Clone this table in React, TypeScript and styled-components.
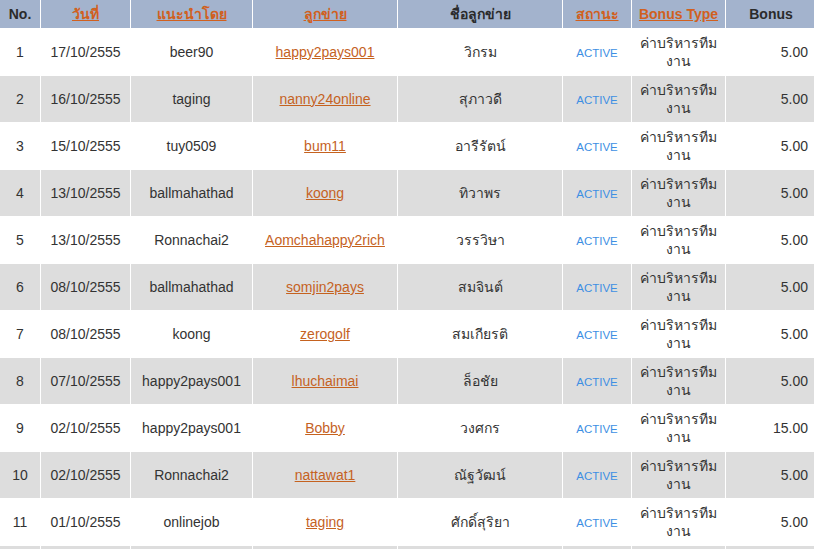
import React from "react";
import styled, { createGlobalStyle } from "styled-components";

const Global = createGlobalStyle`
  html, body { margin: 0; padding: 0; background: #ffffff; }
  body { font-family: "Liberation Sans", Arial, "Noto Sans", sans-serif; overflow: hidden; }
`;

const Table = styled.table`
  border-collapse: separate;
  border-spacing: 1px;
  margin: -1px 0 0 -1px;
  table-layout: fixed;
  width: 817px;
  font-size: 14px;
  color: #333333;
`;

const Th = styled.th<{ $w: number }>`
  width: ${(p) => p.$w}px;
  height: 28px;
  padding: 0 4px;
  background: #a3b3cd;
  color: #2b2b2b;
  font-weight: bold;
  font-size: 14px;
  text-align: center;
  box-sizing: border-box;
`;

const HeadLink = styled.a`
  color: #d1601e;
  text-decoration: underline;
`;

const Row = styled.tr<{ $alt: boolean }>`
  background: ${(p) => (p.$alt ? "#dddddd" : "#ffffff")};
`;

const Td = styled.td<{ $align?: string }>`
  height: 46px;
  padding: 0 ${(p) => (p.$align === "right" ? "8px" : "5px")} 0 5px;
  text-align: ${(p) => p.$align || "center"};
  vertical-align: middle;
  box-sizing: border-box;
  line-height: 18px;
`;

const Link = styled.a`
  color: #c5621f;
  text-decoration: underline;
`;

const Status = styled.span`
  color: #3d8fe3;
  font-size: 11.5px;
`;

const rows = [
  ["17/10/2555", "beer90", "happy2pays001", "วิกรม", "5.00"],
  ["16/10/2555", "taging", "nanny24online", "สุภาวดี", "5.00"],
  ["15/10/2555", "tuy0509", "bum11", "อารีรัตน์", "5.00"],
  ["13/10/2555", "ballmahathad", "koong", "ทิวาพร", "5.00"],
  ["13/10/2555", "Ronnachai2", "Aomchahappy2rich", "วรรวิษา", "5.00"],
  ["08/10/2555", "ballmahathad", "somjin2pays", "สมจินต์", "5.00"],
  ["08/10/2555", "koong", "zerogolf", "สมเกียรติ", "5.00"],
  ["07/10/2555", "happy2pays001", "lhuchaimai", "ล็อชัย", "5.00"],
  ["02/10/2555", "happy2pays001", "Bobby", "วงศกร", "15.00"],
  ["02/10/2555", "Ronnachai2", "nattawat1", "ณัฐวัฒน์", "5.00"],
  ["01/10/2555", "onlinejob", "taging", "ศักดิ์สุริยา", "5.00"],
];

export default function App() {
  return (
    <>
      <Global />
      <Table>
        <thead>
          <tr>
            <Th $w={40}>No.</Th>
            <Th $w={89}><HeadLink href="#">วันที่</HeadLink></Th>
            <Th $w={121}><HeadLink href="#">แนะนำโดย</HeadLink></Th>
            <Th $w={144}><HeadLink href="#">ลูกข่าย</HeadLink></Th>
            <Th $w={164}>ชื่อลูกข่าย</Th>
            <Th $w={68}><HeadLink href="#">สถานะ</HeadLink></Th>
            <Th $w={93}><HeadLink href="#">Bonus Type</HeadLink></Th>
            <Th $w={90}>Bonus</Th>
          </tr>
        </thead>
        <tbody>
          {rows.map((r, i) => (
            <Row key={i} $alt={i % 2 === 1}>
              <Td>{i + 1}</Td>
              <Td>{r[0]}</Td>
              <Td>{r[1]}</Td>
              <Td><Link href="#">{r[2]}</Link></Td>
              <Td>{r[3]}</Td>
              <Td><Status>ACTIVE</Status></Td>
              <Td>ค่าบริหารทีมงาน</Td>
              <Td $align="right">{r[4]}</Td>
            </Row>
          ))}
          <Row $alt={true}>
            <Td />
            <Td />
            <Td />
            <Td />
            <Td />
            <Td />
            <Td />
            <Td $align="right" />
          </Row>
        </tbody>
      </Table>
    </>
  );
}
